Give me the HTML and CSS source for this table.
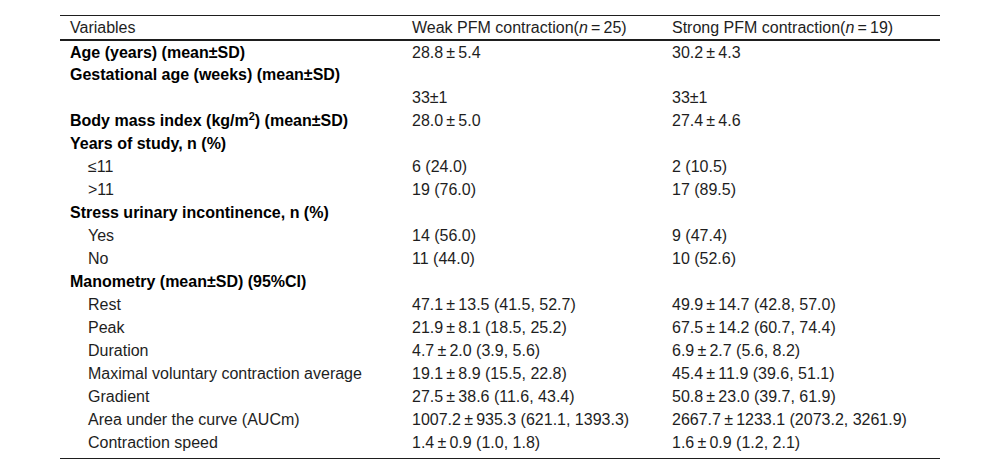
FILE: index.html
```html
<!DOCTYPE html>
<html>
<head>
<meta charset="utf-8">
<link rel="stylesheet" href="styles.css">
</head>
<body>
<div class="wrap">
<table class="tbl">
  <colgroup>
    <col class="c1"><col class="c2"><col class="c3">
  </colgroup>
  <thead>
    <tr><th>Variables</th><th>Weak PFM contraction(<i>n</i>&#8201;=&#8201;25)</th><th>Strong PFM contraction(<i>n</i>&#8201;=&#8201;19)</th></tr>
  </thead>
  <tbody>
    <tr><td class="b">Age (years) (mean±SD)</td><td>28.8&#8201;±&#8201;5.4</td><td>30.2&#8201;±&#8201;4.3</td></tr>
    <tr><td class="b">Gestational age (weeks) (mean±SD)</td><td></td><td></td></tr>
    <tr><td></td><td>33±1</td><td>33±1</td></tr>
    <tr><td class="b">Body mass index (kg/m<sup>2</sup>) (mean±SD)</td><td>28.0&#8201;±&#8201;5.0</td><td>27.4&#8201;±&#8201;4.6</td></tr>
    <tr><td class="b">Years of study, n (%)</td><td></td><td></td></tr>
    <tr><td class="i">≤11</td><td>6 (24.0)</td><td>2 (10.5)</td></tr>
    <tr><td class="i">&gt;11</td><td>19 (76.0)</td><td>17 (89.5)</td></tr>
    <tr><td class="b">Stress urinary incontinence, n (%)</td><td></td><td></td></tr>
    <tr><td class="i">Yes</td><td>14 (56.0)</td><td>9 (47.4)</td></tr>
    <tr><td class="i">No</td><td>11 (44.0)</td><td>10 (52.6)</td></tr>
    <tr><td class="b">Manometry (mean±SD) (95%CI)</td><td></td><td></td></tr>
    <tr><td class="i">Rest</td><td>47.1&#8201;±&#8201;13.5 (41.5, 52.7)</td><td>49.9&#8201;±&#8201;14.7 (42.8, 57.0)</td></tr>
    <tr><td class="i">Peak</td><td>21.9&#8201;±&#8201;8.1 (18.5, 25.2)</td><td>67.5&#8201;±&#8201;14.2 (60.7, 74.4)</td></tr>
    <tr><td class="i">Duration</td><td>4.7&#8201;±&#8201;2.0 (3.9, 5.6)</td><td>6.9&#8201;±&#8201;2.7 (5.6, 8.2)</td></tr>
    <tr><td class="i">Maximal voluntary contraction average</td><td>19.1&#8201;±&#8201;8.9 (15.5, 22.8)</td><td>45.4&#8201;±&#8201;11.9 (39.6, 51.1)</td></tr>
    <tr><td class="i">Gradient</td><td>27.5&#8201;±&#8201;38.6 (11.6, 43.4)</td><td>50.8&#8201;±&#8201;23.0 (39.7, 61.9)</td></tr>
    <tr><td class="i">Area under the curve (AUCm)</td><td>1007.2&#8201;±&#8201;935.3 (621.1, 1393.3)</td><td>2667.7&#8201;±&#8201;1233.1 (2073.2, 3261.9)</td></tr>
    <tr class="last"><td class="i">Contraction speed</td><td>1.4&#8201;±&#8201;0.9 (1.0, 1.8)</td><td>1.6&#8201;±&#8201;0.9 (1.2, 2.1)</td></tr>
  </tbody>
</table>
</div>
</body>
</html>
```

FILE: styles.css
```css
html, body {
  margin: 0;
  padding: 0;
  background: #fff;
}
.wrap {
  padding: 15px 60px 0 60px;
}
.tbl {
  width: 880px;
  border-collapse: collapse;
  table-layout: fixed;
  font-family: "Liberation Sans", Arial, sans-serif;
  font-size: 16px;
  color: #1e1e1e;
  border-top: 1px solid #1e1e1e;
  border-bottom: 1px solid #1e1e1e;
}
.c1 { width: 342px; }
.c2 { width: 260px; }
.c3 { width: 278px; }
.tbl th {
  font-weight: normal;
  text-align: left;
  padding: 0 10px;
  height: 23px;
  line-height: 22px;
  border-bottom: 2px solid #1e1e1e;
}
.tbl td {
  padding: 3.2px 10px 0 10px;
  height: 23px;
  line-height: 18px;
  vertical-align: top;
  box-sizing: border-box;
  white-space: nowrap;
}
.tbl tr.last td {
  height: 27px;
}
.tbl td.b {
  font-weight: bold;
  color: #000;
}
.tbl td.i {
  padding-left: 28px;
}
.tbl sup {
  font-size: 11px;
  line-height: 0;
  vertical-align: 6px;
}
```
